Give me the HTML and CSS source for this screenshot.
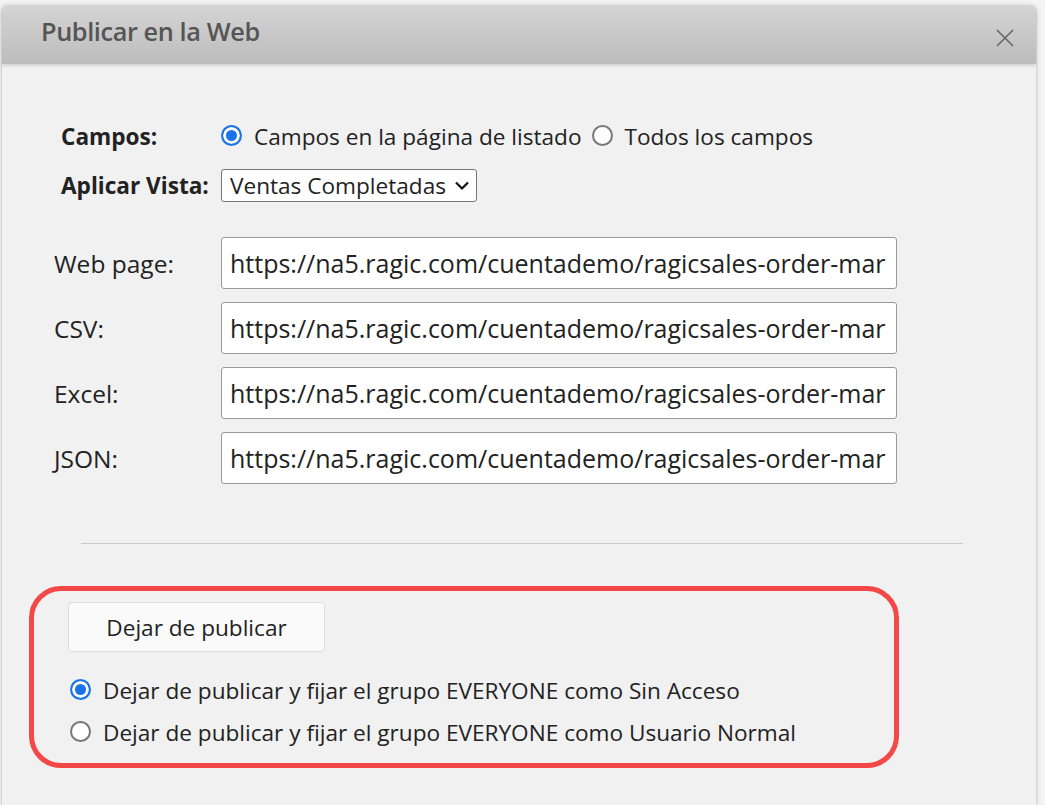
FILE: index.html
```html
<!DOCTYPE html>
<html lang="es">
<head>
    <meta charset="UTF-8">
    <title>Publicar en la Web</title>
    <link rel="stylesheet" href="styles.css">
</head>
<body>
    <div class="dialog">
        <div class="dialog-header">
            <span class="dialog-title">Publicar en la Web</span>
            <span class="dialog-close">
                <svg width="20" height="20" viewBox="0 0 20 20"><path d="M2 2 L18 18 M18 2 L2 18" stroke="#666" stroke-width="1.6" fill="none"/></svg>
            </span>
        </div>

        <div class="dialog-body">
            <div class="options">
                <div class="opt-label">Campos:</div>
                <div class="opt-value">
                    <label class="radio"><span class="radio-dot checked"></span>Campos en la página de listado</label>
                    <label class="radio"><span class="radio-dot"></span>Todos los campos</label>
                </div>
                <div class="opt-label">Aplicar Vista:</div>
                <div class="opt-value">
                    <div class="select">Ventas Completadas
                        <svg width="16" height="11" viewBox="0 0 16 11"><path d="M2 2.5 L8 8.5 L14 2.5" stroke="#111" stroke-width="2.2" fill="none"/></svg>
                    </div>
                </div>
            </div>

            <div class="links">
                <div class="link-label">Web page:</div>
                <div class="link-box">https://na5.ragic.com/cuentademo/ragicsales-order-mar</div>
                <div class="link-label">CSV:</div>
                <div class="link-box">https://na5.ragic.com/cuentademo/ragicsales-order-mar</div>
                <div class="link-label">Excel:</div>
                <div class="link-box">https://na5.ragic.com/cuentademo/ragicsales-order-mar</div>
                <div class="link-label">JSON:</div>
                <div class="link-box">https://na5.ragic.com/cuentademo/ragicsales-order-mar</div>
            </div>

            <hr class="divider">

            <div class="unpublish">
                <button class="unpublish-button">Dejar de publicar</button>
                <div class="unpublish-options">
                    <label class="radio"><span class="radio-dot checked"></span>Dejar de publicar y fijar el grupo EVERYONE como Sin Acceso</label>
                    <label class="radio"><span class="radio-dot"></span>Dejar de publicar y fijar el grupo EVERYONE como Usuario Normal</label>
                </div>
            </div>
        </div>
    </div>
</body>
</html>
```

FILE: styles.css
```css
body {
    margin: 0;
    background: #f4f4f4;
    font-family: "Open Sans", sans-serif;
    font-size: 22.6px;
    color: #222;
    overflow: hidden;
}
.dialog {
    margin: 5px 0 0 1px;
    width: 1036px;
    height: 820px;
    background: #f1f1f1;
    border: 1px solid #d6d6d6;
    border-radius: 6px 6px 0 0;
    box-shadow: 0 0 4px rgba(0,0,0,0.15);
    box-sizing: border-box;
}
.dialog-header {
    height: 58px;
    display: flex;
    align-items: center;
    justify-content: space-between;
    padding: 0 21px 0 39px;
    background: linear-gradient(#d4d4d4, #bcbcbc);
    border-radius: 5px 5px 0 0;
    box-shadow: 0 2px 3px rgba(0,0,0,0.12);
}
.dialog-title {
    color: #555;
    font-size: 25.3px;
    font-weight: 600;
    letter-spacing: -0.4px;
    margin-top: -9px;
}
.dialog-close {
    display: flex;
    margin-top: 6px;
}
.dialog-body {
    padding: 57px 0 0 0;
}
.options {
    display: grid;
    grid-template-columns: 160px auto;
    row-gap: 17px;
    padding-left: 59px;
    align-items: center;
}
.opt-label {
    font-weight: bold;
}
.opt-value {
    display: flex;
    align-items: center;
    gap: 10px;
}
.radio {
    display: flex;
    align-items: center;
    gap: 12px;
}
.radio-dot {
    width: 21px;
    height: 21px;
    border: 2px solid #777;
    border-radius: 50%;
    background: #fff;
    box-sizing: border-box;
    margin-top: -3px;
}
.radio-dot.checked {
    border: 2px solid #1a73e8;
    box-shadow: inset 0 0 0 3px #fff;
    background: #1a73e8;
}
.select {
    display: flex;
    align-items: center;
    gap: 8px;
    height: 33px;
    padding: 0 6px 0 8px;
    background: #fff;
    border: 1px solid #767676;
    border-radius: 3px;
    box-sizing: border-box;
}
.links {
    display: grid;
    grid-template-columns: 167px 676px;
    row-gap: 13px;
    padding-left: 52px;
    margin-top: 35px;
    align-items: center;
    font-size: 24.5px;
}
.link-box {
    height: 52px;
    line-height: 50px;
    padding: 0 10px 0 8px;
    font-size: 25px;
    background: #fff;
    border: 1px solid #999;
    border-radius: 3px;
    box-sizing: border-box;
    white-space: nowrap;
    overflow: hidden;
}
.divider {
    margin: 59px 0 0 79px;
    width: 882px;
    border: none;
    border-top: 1px solid #c9c9c9;
}
.unpublish {
    margin: 42px 0 0 27px;
    width: 870px;
    height: 182px;
    box-sizing: border-box;
    border: 5px solid #f44848;
    border-radius: 32px;
    padding: 11px 0 0 34px;
}
.unpublish-button {
    font-family: "Open Sans", sans-serif;
    font-size: 22.6px;
    color: #222;
    width: 257px;
    height: 50px;
    background: #fafafa;
    border: 1px solid #ddd;
    border-radius: 4px;
}
.unpublish-options {
    display: flex;
    flex-direction: column;
    gap: 11px;
    margin-top: 23px;
    padding-left: 2px;
}
```
